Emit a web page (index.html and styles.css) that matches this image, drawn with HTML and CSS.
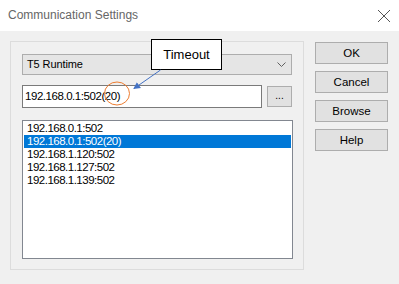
FILE: index.html
```html
<!DOCTYPE html>
<html>
<head>
<meta charset="utf-8">
<link rel="stylesheet" href="styles.css">
</head>
<body>
<div class="dialog">
  <div class="titlebar">
    <span class="title">Communication Settings</span>
    <svg class="close" width="14" height="14" viewBox="0 0 14 14"><path d="M1 1L13 13M13 1L1 13" stroke="#555" stroke-width="1" fill="none"/></svg>
  </div>
  <div class="content">
    <div class="group">
      <div class="combo">
        <span>T5 Runtime</span>
        <svg class="chev" width="9" height="5" viewBox="0 0 9 5"><path d="M0.5 0.5L4.5 4.5L8.5 0.5" stroke="#606060" fill="none"/></svg>
      </div>
      <div class="row">
        <div class="input">192.168.0.1:502(20)</div>
        <div class="dots">...</div>
      </div>
      <div class="list">
        <div class="item">192.168.0.1:502</div>
        <div class="item sel">192.168.0.1:502(20)</div>
        <div class="item">192.168.1.120:502</div>
        <div class="item">192.168.1.127:502</div>
        <div class="item">192.168.1.139:502</div>
      </div>
    </div>
    <div class="buttons">
      <div class="btn">OK</div>
      <div class="btn">Cancel</div>
      <div class="btn">Browse</div>
      <div class="btn">Help</div>
    </div>
  </div>
  <div class="callout">Timeout</div>
  <svg class="annot" width="399" height="284" viewBox="0 0 399 284">
    <defs>
      <marker id="ah" markerWidth="8" markerHeight="8" refX="6" refY="4" orient="auto" markerUnits="userSpaceOnUse">
        <path d="M0 0.5L7 4L0 7.5Z" fill="#4472c4"/>
      </marker>
    </defs>
    <line x1="160.5" y1="70" x2="134" y2="88.5" stroke="#4472c4" stroke-width="1" marker-end="url(#ah)"/>
    <ellipse cx="117" cy="93.5" rx="12.5" ry="11.5" fill="none" stroke="#ed7d31" stroke-width="1"/>
  </svg>
</div>
</body>
</html>
```

FILE: styles.css
```css
* { box-sizing: border-box; }
html, body { margin: 0; padding: 0; }
body {
  width: 399px;
  height: 284px;
  overflow: hidden;
  background: #f0f0f0;
  font-family: "Liberation Sans", Arial, sans-serif;
  font-size: 11px;
  color: #000;
}
.dialog { position: relative; width: 399px; height: 284px; }
.titlebar {
  height: 31px;
  background: #fff;
  display: flex;
  align-items: center;
  justify-content: space-between;
  padding: 0 8px 0 8px;
}
.title { color: #666; font-size: 12px; margin-top: -1px; }
.close { margin-top: 0; }
.content {
  display: flex;
  padding: 10px 0 0 10px;
  gap: 11px;
}
.group {
  width: 294px;
  height: 229px;
  border: 1px solid #dcdcdc;
  padding: 12px 10px 10px 11px;
  display: flex;
  flex-direction: column;
}
.combo {
  height: 21px;
  width: 270px;
  background: #e5e5e5;
  border: 1px solid #adadad;
  display: flex;
  align-items: center;
  justify-content: space-between;
  padding: 0 5px 0 4px;
  letter-spacing: -0.1px;
}
.chev { margin-top: 1px; }
.row {
  display: flex;
  margin-top: 10px;
  height: 23px;
  gap: 5px;
}
.input {
  width: 240px;
  height: 23px;
  background: #fff;
  border: 1px solid #7a7a7a;
  padding: 0 0 0 2px;
  display: flex;
  align-items: center;
  font-size: 11.5px;
  letter-spacing: -0.45px;
}
.dots {
  width: 25px;
  height: 21px;
  margin-top: 1px;
  background: #e1e1e1;
  border: 1px solid #adadad;
  display: flex;
  justify-content: center;
  align-items: center;
  font-size: 10px;
  padding-bottom: 2px;
}
.list {
  margin-top: 12px;
  width: 271px;
  height: 140px;
  background: #fff;
  border: 1px solid #828790;
  padding: 1px;
}
.item {
  height: 13px;
  line-height: 13px;
  padding-left: 3px;
  font-size: 11.5px;
  letter-spacing: -0.5px;
}
.item.sel { background: #0078d7; color: #fff; }
.buttons {
  display: flex;
  flex-direction: column;
  gap: 7px;
  padding-top: 1px;
}
.btn {
  width: 73px;
  height: 22px;
  background: #e1e1e1;
  border: 1px solid #adadad;
  display: flex;
  align-items: center;
  justify-content: center;
  font-size: 11.5px;
}
.callout {
  position: absolute;
  left: 151px;
  top: 39px;
  width: 71px;
  height: 31px;
  background: #fff;
  border: 1px solid #000;
  font-size: 13px;
  display: flex;
  align-items: center;
  justify-content: center;
}
.annot { position: absolute; left: 0; top: 0; pointer-events: none; }
```
